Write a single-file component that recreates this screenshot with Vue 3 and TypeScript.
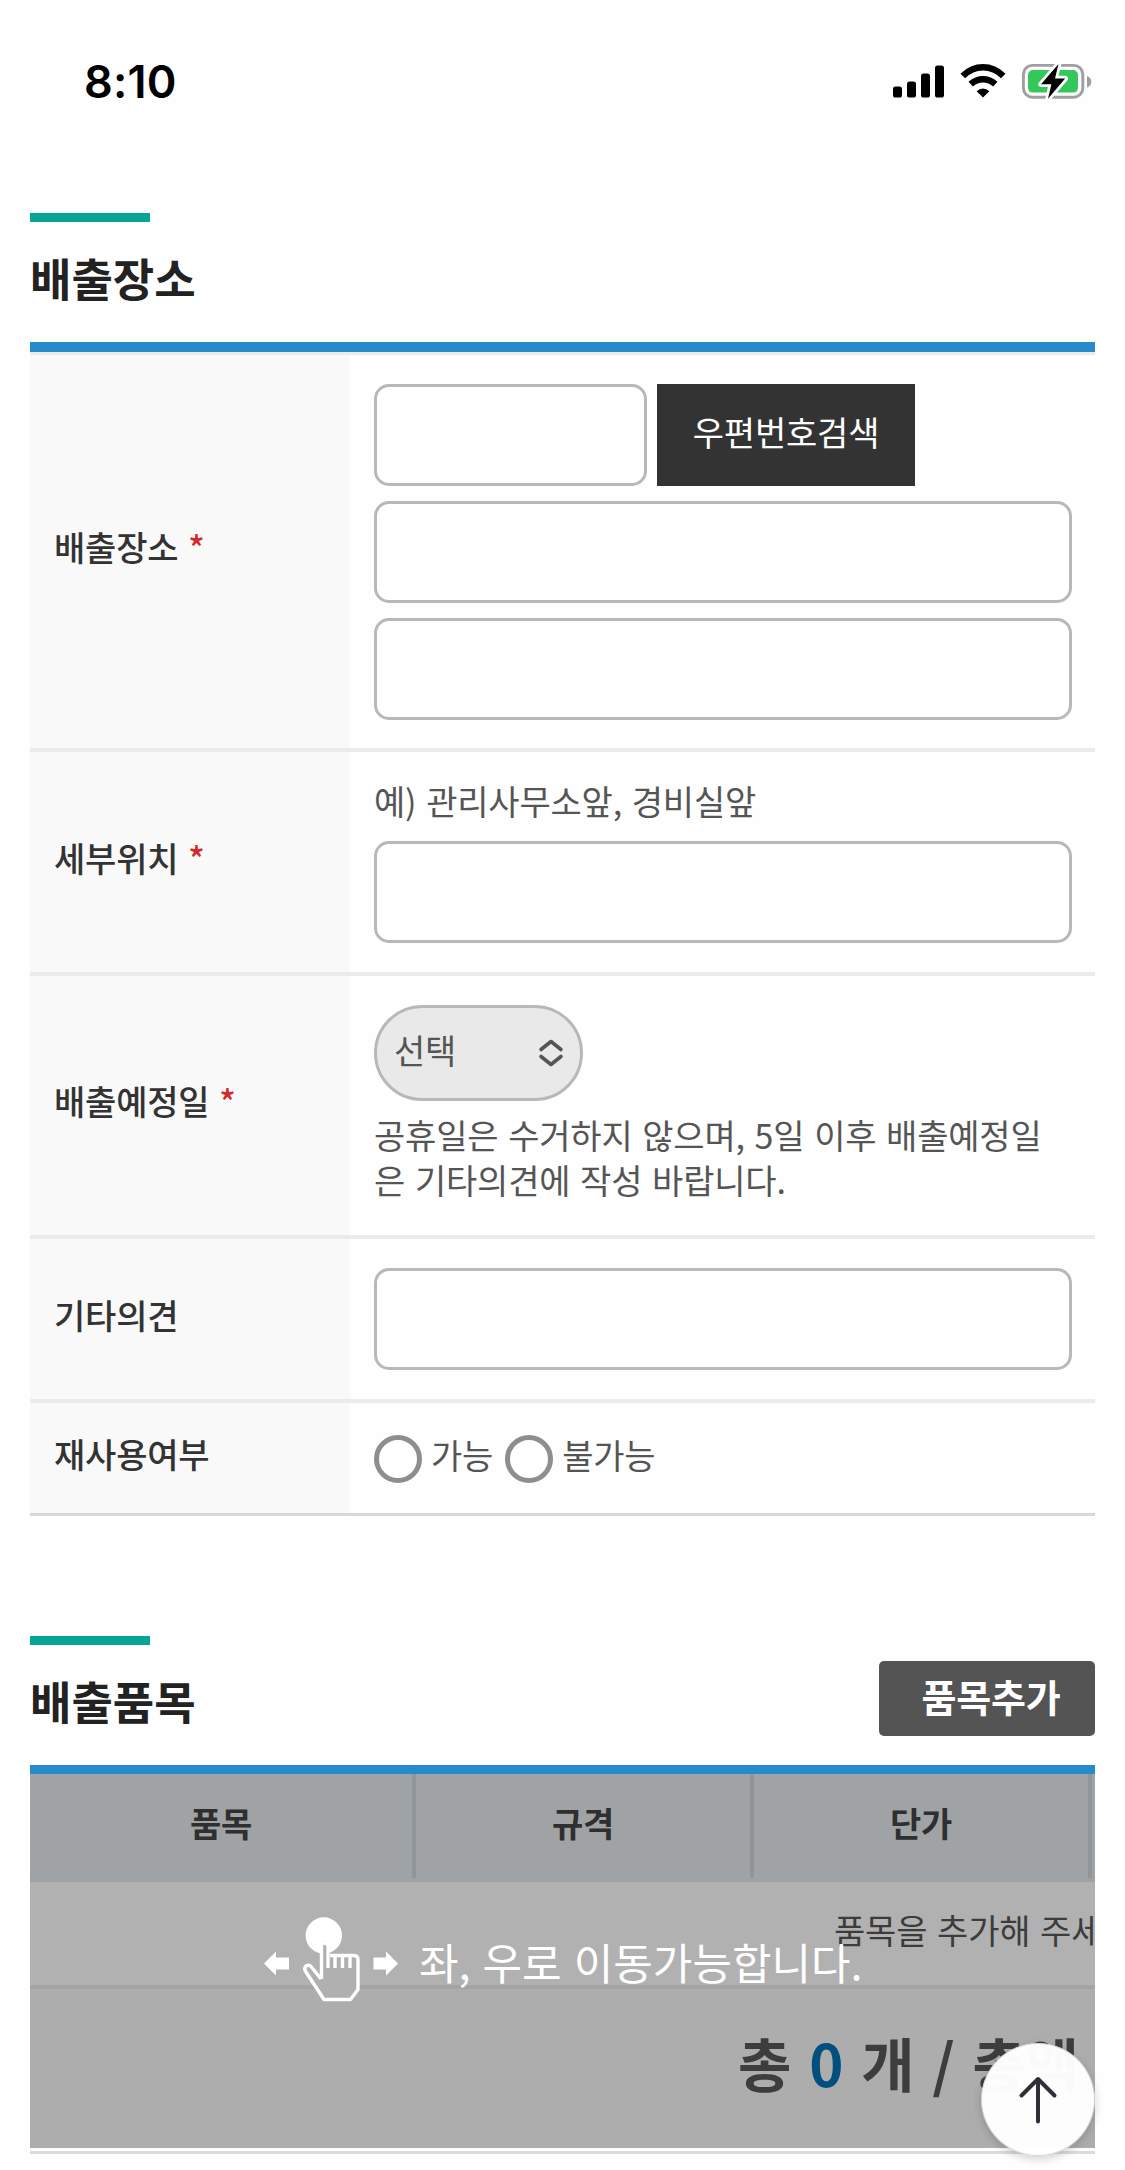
<script setup lang="ts">
import { ref } from 'vue'

interface Column {
  label: string
  width: number
}

const postcode = ref('')
const address = ref('')
const addressDetail = ref('')
const spot = ref('')
const memo = ref('')
const reuse = ref('')
const count = ref(0)

const columns: Column[] = [
  { label: '품목', width: 386 },
  { label: '규격', width: 338 },
  { label: '단가', width: 338 },
]
</script>

<template>
  <div class="screen">
    <header class="status">
      <span class="clock">8:10</span>
      <svg class="status-icons" width="204" height="40" viewBox="890 61 204 40">
        <g fill="#000">
          <rect x="893" y="86.5" width="9" height="11" rx="2.6" />
          <rect x="907" y="81.5" width="9" height="16" rx="2.6" />
          <rect x="921" y="73.5" width="9" height="24" rx="2.6" />
          <rect x="935" y="65.5" width="9" height="32" rx="2.6" />
          <path d="M983 97.6L976.6 91.2Q983 85.6 989.4 91.2Z" />
        </g>
        <g fill="none" stroke="#000" stroke-width="6.6">
          <path d="M962.8 76Q971.500 67.3 983 67.3T1003.2 76" />
          <path d="M970.7 84.1Q976.2 79.200 983 79.200T995.3 84.1" />
        </g>
        <rect x="1023.4" y="65.4" width="59.4" height="31.8" rx="9" fill="none" stroke="#9f9f9f" stroke-width="2.9" />
        <rect x="1028" y="70" width="50" height="22.6" rx="5" fill="#34c759" />
        <path d="M1087 76q4.3 1.6 4.3 5.7t-4.3 5.7z" fill="#9f9f9f" />
        <path
          d="M1058.5 64L1041 84.2H1051.4L1048 98.8L1065.2 78.6H1055z"
          fill="#000"
          stroke="#fff"
          stroke-width="5.5"
          stroke-linejoin="round"
          paint-order="stroke"
        />
      </svg>
    </header>

    <section class="block">
      <div class="title-row">
        <h2>배출장소</h2>
      </div>
      <div class="form">
        <div class="row row-place">
          <div class="label">배출장소 <em>*</em></div>
          <div class="field">
            <div class="inline">
              <input v-model="postcode" class="short" type="text" />
              <button class="search" type="button">우편번호검색</button>
            </div>
            <input v-model="address" type="text" />
            <input v-model="addressDetail" type="text" />
          </div>
        </div>
        <div class="row row-spot">
          <div class="label">세부위치 <em>*</em></div>
          <div class="field">
            <p class="hint">예) 관리사무소앞, 경비실앞</p>
            <input v-model="spot" type="text" />
          </div>
        </div>
        <div class="row row-date">
          <div class="label">배출예정일 <em>*</em></div>
          <div class="field">
            <div class="select">
              <span>선택</span>
              <svg width="26" height="30" viewBox="0 0 26 30" fill="none" stroke="#555" stroke-width="3.6" stroke-linecap="round" stroke-linejoin="round">
                <path d="M3 11.5L13 3.5L23 11.5M3 18.5L13 26.5L23 18.5" />
              </svg>
            </div>
            <p class="note">공휴일은 수거하지 않으며, 5일 이후 배출예정일<br />은 기타의견에 작성 바랍니다.</p>
          </div>
        </div>
        <div class="row row-memo">
          <div class="label">기타의견</div>
          <div class="field">
            <input v-model="memo" type="text" />
          </div>
        </div>
        <div class="row row-reuse">
          <div class="label">재사용여부</div>
          <div class="field radios">
            <label><input v-model="reuse" type="radio" value="y" /><span>가능</span></label>
            <label><input v-model="reuse" type="radio" value="n" /><span>불가능</span></label>
          </div>
        </div>
      </div>
    </section>

    <section class="block items">
      <div class="title-row">
        <h2>배출품목</h2>
        <button class="add" type="button">품목추가</button>
      </div>
      <div class="scroller">
        <div class="table">
          <div class="thead">
            <div v-for="c in columns" :key="c.label" class="th" :style="{ width: c.width + 'px' }">{{ c.label }}</div>
          </div>
          <div class="empty">품목을 추가해 주세요.</div>
          <div class="total">총 <b>{{ count }}</b> 개 / 총액</div>
        </div>
        <div class="guide">
          <svg width="100" height="66" viewBox="260 1914 100 66" overflow="visible">
            <g fill="#fff">
              <path d="M263 1963.5L275 1951.5V1957.5H288V1969.5H275V1975.5Z" />
              <path d="M397 1963.5L385 1951.5V1957.5H372.500V1969.5H385V1975.5Z" />
              <circle cx="322.800" cy="1935.500" r="18.200" />
            </g>
            <path
              d="M320 1979V1946Q320 1941.500 323.500 1941.500T327 1946V1955H353Q357 1955 357 1960V1990L350 1999.500H324L304 1971Q302 1966 306 1965Q309 1964.500 311 1967.500Z"
              fill="#b0b0b0"
            />
            <path
              d="M320.500 1979V1946Q320.500 1943 323.500 1943T327 1946V1968M320 1979L310.500 1967Q308 1964 305 1966Q302.500 1968.500 305 1972L323 1999.500H349.500L357 1989.500V1960Q357 1955.500 353 1955.500H329M334 1956V1968M341.500 1956V1968M349 1956V1968"
              fill="none"
              stroke="#fff"
              stroke-width="3.400"
              stroke-linejoin="round"
            />
          </svg>
          <span>좌, 우로 이동가능합니다.</span>
        </div>
      </div>
    </section>

    <button class="top" type="button" aria-label="top">
      <svg width="44" height="52" viewBox="0 0 44 52" fill="none" stroke="#2f2f37" stroke-width="4" stroke-linecap="round" stroke-linejoin="round">
        <path d="M22 47.500V5M5.500 21.500L22 5L38.500 21.500" />
      </svg>
    </button>
  </div>
</template>

<style>
body {
  background: #fefefe;
}
</style>

<style scoped>
.screen,
.screen * {
  box-sizing: border-box;
}
.screen {
  position: relative;
  width: 1125px;
  height: 2170px;
  overflow: hidden;
  background: #fefefe;
  color: #555;
  font-family: 'Noto Sans CJK KR', sans-serif;
  font-size: 34px;
  letter-spacing: -0.2px;
  word-spacing: 2.4px;
}
button,
input {
  font: inherit;
  letter-spacing: inherit;
  margin: 0;
  padding: 0;
  border: 0;
}
.status {
  display: flex;
  justify-content: space-between;
  height: 213px;
  padding: 61px 31px 0 84px;
}
.clock {
  height: 40px;
  font: 600 45px/42px Inter, sans-serif;
  letter-spacing: 0.2px;
  color: #000;
}
.block {
  margin: 0 30px;
}
.title-row {
  display: flex;
  justify-content: space-between;
  align-items: flex-start;
  height: 129px;
}
h2 {
  margin: 0;
  color: #222;
  font-size: 45px;
  font-weight: 700;
  line-height: 60px;
  letter-spacing: 0;
  white-space: nowrap;
}
h2::before {
  content: '';
  display: block;
  width: 120px;
  height: 9px;
  margin-bottom: 26px;
  background: #06a596;
}
.form {
  border-top: 10px solid #258bcb;
  border-bottom: 3px solid #d8d8d8;
}
.row {
  display: flex;
  border-top: 4px solid #ebebeb;
}
.row:first-child {
  border-top-width: 3px;
}
.label {
  display: flex;
  align-items: center;
  width: 320px;
  padding: 0 0 10px 24px;
  background: #f9f9f9;
  color: #333;
  font-weight: 500;
  white-space: pre;
}
.label em {
  color: #d3292c;
  font-style: normal;
}
.field {
  display: flex;
  flex: 1;
  flex-direction: column;
  gap: 15px;
  padding: 29px 23px 0 24px;
}
.row-place {
  height: 396px;
}
.row-spot {
  height: 224px;
}
.row-date {
  height: 263px;
}
.row-memo {
  height: 164px;
}
.row-reuse {
  height: 114px;
}
.inline {
  display: flex;
  gap: 10px;
}
input[type='text'] {
  width: 100%;
  height: 102px;
  border: 3px solid #b8b8b8;
  border-radius: 15px;
  background: #fff;
  outline: none;
}
input.short {
  width: 273px;
}
.search {
  width: 258px;
  height: 102px;
  padding-bottom: 7px;
  background: #333;
  color: #fff;
}
p {
  margin: 0;
  line-height: 45px;
  white-space: nowrap;
}
.row-spot .field {
  gap: 12px;
  padding-top: 32px;
}
.hint {
  height: 45px;
  line-height: 33px;
}
.row-spot .field input {
  flex: none;
}
.select {
  display: flex;
  justify-content: space-between;
  align-items: center;
  width: 209px;
  height: 96px;
  padding: 0 16px 0 17px;
  border: 3px solid #b8b8b8;
  border-radius: 48px;
  background: #e9e9e9;
}
.select span {
  padding-bottom: 8px;
}
.row-date .field {
  gap: 11px;
}
.field.radios {
  flex-direction: row;
  gap: 12px;
  padding-top: 32px;
}
.radios label {
  display: flex;
  height: 48px;
}
.radios input {
  appearance: none;
  width: 48px;
  height: 48px;
  margin-right: 9px;
  border: 5px solid #8e8e8e;
  border-radius: 50%;
  background: #fff;
}
.radios span {
  line-height: 39px;
}
.items {
  margin-top: 120px;
}
.add {
  width: 216px;
  height: 75px;
  margin-top: 25px;
  padding: 0 0 6px 8px;
  border-radius: 5px;
  background: #545454;
  color: #fff;
  font-size: 38px;
  font-weight: 700;
}
.scroller {
  position: relative;
  overflow: hidden;
  height: 389px;
  border-top: 9px solid #258bcb;
  border-bottom: 3px solid #dcdcdc;
}
.table {
  width: 1400px;
}
.thead {
  display: flex;
  height: 108px;
  border-bottom: 4px solid #a1a1a1;
  background: #9fa3a6;
}
.th {
  border-right: 4px solid #8f9599;
  color: #2f2f2f;
  font-weight: 700;
  line-height: 98px;
  text-align: center;
}
.empty {
  height: 107px;
  padding-left: 804px;
  border-bottom: 4px solid #a4a4a4;
  background: #b1b1b1;
  color: #3c3c3c;
  line-height: 96px;
}
.total {
  height: 159px;
  padding-left: 708px;
  background: #adadad;
  color: #3d3d3d;
  font-size: 58px;
  font-weight: 700;
  line-height: 147px;
  word-spacing: 5px;
}
.total b {
  color: #004f7c;
  font-weight: 700;
}
.guide {
  position: absolute;
  left: 231px;
  top: 140px;
  display: flex;
  color: #fff;
  font-size: 43px;
  letter-spacing: 0;
}
.guide span {
  margin-left: 58px;
  line-height: 95px;
  white-space: nowrap;
}
.top {
  position: absolute;
  left: 981px;
  top: 2043px;
  display: flex;
  align-items: center;
  justify-content: center;
  width: 114px;
  height: 113px;
  border: 1px solid #d5d5d5;
  border-radius: 50%;
  background: rgba(255, 255, 255, 0.975);
  box-shadow: 0 3px 8px rgba(0, 0, 0, 0.18);
}
</style>
